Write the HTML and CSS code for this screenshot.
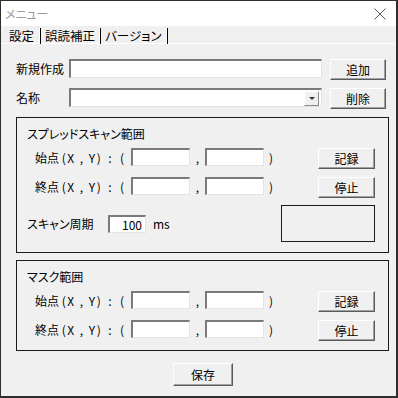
FILE: index.html
```html
<!DOCTYPE html>
<html lang="ja">
<head>
<meta charset="utf-8">
<link rel="stylesheet" href="styles.css">
</head>
<body>
<div class="window">
  <div class="titlebar">
    <span class="title">メニュー</span>
    <svg class="close" width="12" height="12" viewBox="0 0 12 12"><path d="M0.5 0.5 L11.5 11.5 M11.5 0.5 L0.5 11.5" stroke="#555" stroke-width="1" fill="none"/></svg>
  </div>
  <div class="tabs">
    <span class="tab first">設定</span><span class="sep"></span>
    <span class="tab">誤読補正</span><span class="sep"></span>
    <span class="tab kana">バージョン</span><span class="sep"></span>
  </div>
  <div class="main">
    <div class="row">
      <span class="label">新規作成</span>
      <div class="input wide"></div>
      <button class="btn">追加</button>
    </div>
    <div class="row">
      <span class="label">名称</span>
      <div class="input wide select"><span class="drop"><span class="tri"></span></span></div>
      <button class="btn">削除</button>
    </div>

    <div class="group g1">
      <div class="gtitle kana">スプレッドスキャン範囲</div>
      <div class="prow">
        <span class="plabel">始点 <span class="xy">(X , Y)</span></span><span class="colon">:</span><span class="paren">(</span>
        <div class="input coord c1"></div><span class="comma">,</span><div class="input coord"></div><span class="cparen">)</span>
        <button class="btn small">記録</button>
      </div>
      <div class="prow">
        <span class="plabel">終点 <span class="xy">(X , Y)</span></span><span class="colon">:</span><span class="paren">(</span>
        <div class="input coord c1"></div><span class="comma">,</span><div class="input coord"></div><span class="cparen">)</span>
        <button class="btn small">停止</button>
      </div>
      <div class="scanrow">
        <span class="slabel kana">スキャン周期</span>
        <div class="input num">100</div>
        <span class="unit">ms</span>
        <div class="box"></div>
      </div>
    </div>

    <div class="group g2">
      <div class="gtitle kana">マスク範囲</div>
      <div class="prow">
        <span class="plabel">始点 <span class="xy">(X , Y)</span></span><span class="colon">:</span><span class="paren">(</span>
        <div class="input coord c1"></div><span class="comma">,</span><div class="input coord"></div><span class="cparen">)</span>
        <button class="btn small">記録</button>
      </div>
      <div class="prow">
        <span class="plabel">終点 <span class="xy">(X , Y)</span></span><span class="colon">:</span><span class="paren">(</span>
        <div class="input coord c1"></div><span class="comma">,</span><div class="input coord"></div><span class="cparen">)</span>
        <button class="btn small">停止</button>
      </div>
    </div>

    <div class="footer">
      <button class="btn save">保存</button>
    </div>
  </div>
</div>
</body>
</html>
```

FILE: styles.css
```css
* { box-sizing: border-box; }
html, body { margin: 0; padding: 0; }
body {
  width: 398px;
  height: 398px;
  font-family: "Noto Sans CJK JP", "Liberation Sans", sans-serif;
  font-size: 12px;
  color: #000;
  background: #f0f0f0;
}
.kana { font-feature-settings: "palt"; }
.window {
  width: 398px;
  height: 398px;
  background: #f0f0f0;
  border-left: 1px solid #2e2e2e;
  border-top: 1px solid #2e2e2e;
  border-right: 2px solid #2e2e2e;
  border-bottom: 2px solid #2e2e2e;
}
.titlebar {
  height: 25px;
  background: #fff;
  display: flex;
  align-items: center;
  padding: 0 10px 0 4px;
}
.title {
  color: #9a9a9a;
  font-feature-settings: "palt";
  line-height: 14px;
}
.close { margin-left: auto; }
.tabs {
  height: 18px;
  display: flex;
  align-items: flex-end;
  padding-left: 8px;
  border-bottom: 1px solid #fff;
}
.tab {
  line-height: 14px;
  padding: 0 4px 0 4px;
  font-size: 12.5px;
}
.tab.first { padding-left: 0; padding-right: 5px; }
.sep {
  width: 2px;
  height: 16px;
  margin-bottom: -1px;
  border-left: 1px solid #fff;
  border-right: 1px solid #000;
}
.main {
  padding: 15px 0 0 15px;
}
.row {
  display: flex;
  align-items: flex-start;
  height: 21px;
  margin-bottom: 8px;
}
.label {
  width: 53px;
  line-height: 20px;
}
.input {
  background: #fff;
  border-top: 2px solid #7a7a7a;
  border-left: 2px solid #7a7a7a;
  border-right: 1px solid #e3e3e3;
  border-bottom: 1px solid #e3e3e3;
  height: 19px;
}
.wide { width: 253px; position: relative; }
.select .drop {
  position: absolute;
  right: 2px;
  top: 1px;
  width: 15px;
  height: 15px;
  background: #f0f0f0;
  border: 1px solid;
  border-color: #fff #8a8a8a #8a8a8a #fff;
  display: flex;
  align-items: center;
  justify-content: center;
}
.tri {
  width: 0; height: 0;
  border-left: 3px solid transparent;
  border-right: 3px solid transparent;
  border-top: 3px solid #333;
}
.btn {
  font: inherit;
  color: #000;
  padding: 0;
  background: #f0f0f0;
  border: 1px solid;
  border-color: #fff #5a5a5a #5a5a5a #fff;
  box-shadow: inset -1px -1px 0 #a0a0a0;
  width: 56px;
  height: 21px;
  margin-left: 8px;
  line-height: 18px;
}
.group {
  width: 373px;
  border: 1px solid #1a1a1a;
  padding: 9px 13px 0 10px;
}
.g1 { margin-top: 2px; height: 136px; }
.g2 { margin-top: 7px; height: 91px; }
.gtitle { line-height: 14px; height: 14px; margin-bottom: 7px; }
.prow {
  display: flex;
  align-items: flex-start;
  height: 21px;
  margin-bottom: 8px;
  padding-left: 8px;
}
.prow .input { height: 18px; }
.plabel { width: 69px; line-height: 19px; white-space: pre; }
.xy { letter-spacing: 1.5px; }
.colon { width: 12px; text-align: center; line-height: 19px; }
.paren { width: 12px; text-align: center; line-height: 19px; }
.c1 { margin-left: 3px; }
.coord { width: 59px; }
.comma { width: 15px; text-align: center; line-height: 19px; }
.cparen { width: 14px; text-align: center; line-height: 19px; }
.btn.small { margin-left: auto; width: 57px; }
.scanrow {
  display: flex;
  align-items: center;
  height: 37px;
  margin-top: -1px;
}
.slabel { width: 81px; line-height: 18px; }
.num {
  width: 38px;
  height: 18px;
  text-align: right;
  padding-right: 3px;
  line-height: 15px;
}
.unit { margin-left: 7px; }
.box {
  margin-left: auto;
  width: 94px;
  height: 37px;
  border: 1px solid #1a1a1a;
}
.footer {
  padding-left: 157px;
  margin-top: 12px;
}
.btn.save { margin-left: 0; width: 60px; height: 23px; }
```
